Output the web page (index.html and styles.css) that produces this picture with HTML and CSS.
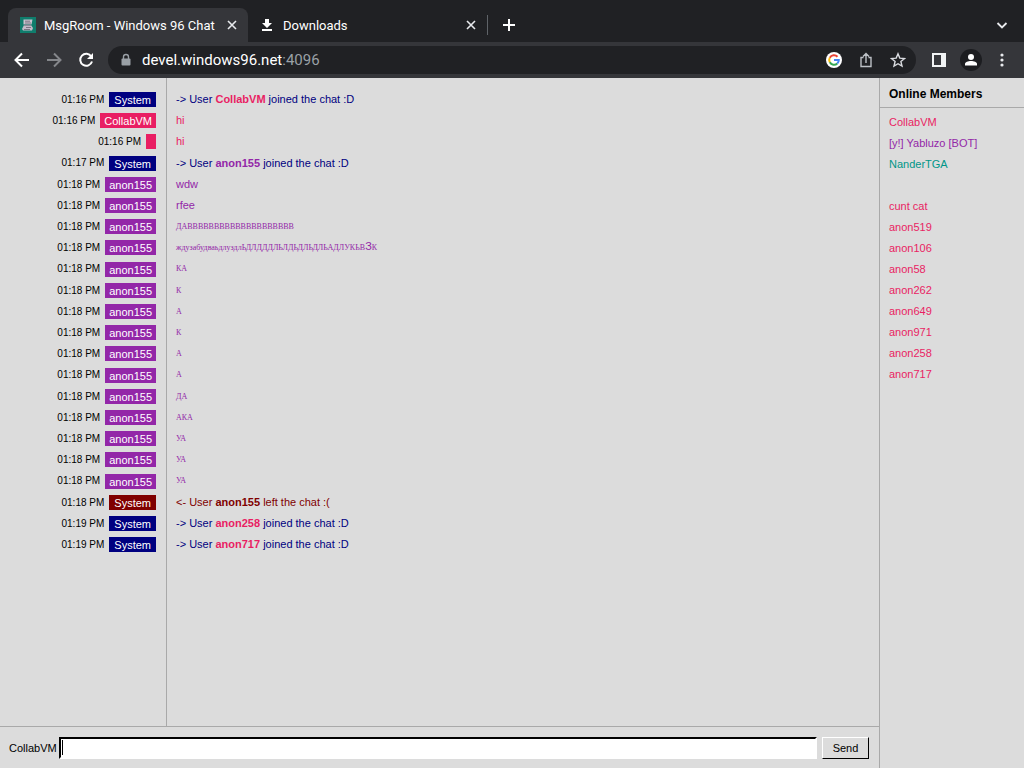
FILE: index.html
```html
<!DOCTYPE html>
<html lang="en">
<head>
  <meta charset="UTF-8">
  <meta name="viewport" content="width=device-width, initial-scale=1.0">
  <title>MsgRoom - Windows 96 Chat</title>
  <link rel="stylesheet" href="styles.css">
</head>
<body>
  <header class="browser">
    <div class="tabs">
      <div class="tab active">
        <svg class="favicon" width="16" height="16" viewBox="0 0 16 16">
          <rect width="16" height="16" fill="#0f7d6c"/>
          <path d="M3.500 2.500h9l-1 5h-8z" fill="#c9c3cf"/>
          <path d="M5 4.200h5M5 6h6" stroke="#6a6271" stroke-width=".8"/>
          <path d="M4 8h7l2 3-1 2.500H3l-1-1.500z" fill="#c2bac8"/>
          <path d="M4 8.200h7M6 10.500h5M4 12.500h6" stroke="#6a6271" stroke-width=".8"/>
        </svg>
        <span class="tab-title">MsgRoom - Windows 96 Chat</span>
        <button class="close" aria-label="Close tab">
          <svg width="10" height="10" viewBox="0 0 10 10"><path d="M1 1l8 8M9 1l-8 8" stroke="#e8eaed" stroke-width="1.600"/></svg>
        </button>
      </div>
      <div class="tab">
        <svg class="favicon" width="16" height="16" viewBox="0 0 16 16">
          <path d="M6 2h4v4h3l-5 5-5-5h3zM3 12h10v2H3z" fill="#fff"/>
        </svg>
        <span class="tab-title">Downloads</span>
        <button class="close" aria-label="Close tab">
          <svg width="10" height="10" viewBox="0 0 10 10"><path d="M1 1l8 8M9 1l-8 8" stroke="#e8eaed" stroke-width="1.600"/></svg>
        </button>
      </div>
      <button class="new-tab" aria-label="New tab">
        <svg width="12" height="12" viewBox="0 0 12 12"><path d="M6 0v12M0 6h12" stroke="#fff" stroke-width="2"/></svg>
      </button>
      <button class="tab-search" aria-label="Search tabs">
        <svg width="12" height="12" viewBox="0 0 12 12"><path d="M1.500 4l4.500 4.500L10.500 4" fill="none" stroke="#e8eaed" stroke-width="1.800"/></svg>
      </button>
    </div>
    <div class="toolbar">
      <button aria-label="Back">
        <svg width="16" height="16" viewBox="0 0 16 16"><path d="M15 8H2M8 1.500L1.500 8 8 14.500" fill="none" stroke="#fff" stroke-width="2"/></svg>
      </button>
      <button aria-label="Forward">
        <svg width="16" height="16" viewBox="0 0 16 16"><path d="M1 8h13M8 1.500L14.500 8 8 14.500" fill="none" stroke="#85878b" stroke-width="2"/></svg>
      </button>
      <button aria-label="Reload">
        <svg width="16" height="16" viewBox="0 0 16 16"><path d="M13.300 4.500A6 6 0 1 0 14 9.500" fill="none" stroke="#fff" stroke-width="2"/><path d="M15 1v6H9z" fill="#fff"/></svg>
      </button>
      <div class="address">
        <svg width="12" height="14" viewBox="0 0 12 14"><path d="M3.500 6V4a2.500 2.500 0 0 1 5 0v2" fill="none" stroke="#9aa0a6" stroke-width="1.400"/><rect x="1.500" y="5.500" width="9" height="7" rx="1" fill="#9aa0a6"/></svg>
        <span class="url">devel.windows96.net<span class="port">:4096</span></span>
        <button aria-label="Search with Google">
          <svg width="16" height="16" viewBox="0 0 16 16">
            <circle cx="8" cy="8" r="8" fill="#fff"/>
            <g fill="none" stroke-width="2">
              <path d="M11.500 4.700A4.800 4.800 0 0 0 3.800 5.700" stroke="#ea4335"/>
              <path d="M3.800 5.700a4.800 4.800 0 0 0 0 4.600" stroke="#fbbc05"/>
              <path d="M3.800 10.300a4.800 4.800 0 0 0 7.500 1.200" stroke="#34a853"/>
              <path d="M11.300 11.500A4.800 4.800 0 0 0 12.800 8H8" stroke="#4285f4"/>
            </g>
          </svg>
        </button>
        <button aria-label="Share">
          <svg width="16" height="16" viewBox="0 0 16 16"><path d="M5.500 5.500h-2.500v9h10v-9h-2.500M8 11V2M5 4.500l3-3 3 3" fill="none" stroke="#bdc1c6" stroke-width="1.400"/></svg>
        </button>
        <button aria-label="Bookmark">
          <svg width="16" height="16" viewBox="0 0 16 16"><path d="M8 1.800l1.800 4.300 4.700.4-3.600 3 1.100 4.600L8 11.700l-4 2.400 1.100-4.600-3.600-3 4.700-.4z" fill="none" stroke="#dadce0" stroke-width="1.400"/></svg>
        </button>
      </div>
      <button aria-label="Side panel">
        <svg width="14" height="14" viewBox="0 0 14 14"><path d="M0 0h14v14H0zM2 2v10h7V2z" fill="#f1f3f4" fill-rule="evenodd"/></svg>
      </button>
      <button class="profile" aria-label="Profile">
        <svg width="22" height="22" viewBox="0 0 22 22"><circle cx="11" cy="11" r="11" fill="#1c1d20"/><circle cx="11" cy="8" r="3" fill="#fff"/><path d="M5 16.500v-1.500c0-2 3-3 6-3s6 1 6 3v1.500z" fill="#fff"/></svg>
      </button>
      <button aria-label="Menu">
        <svg width="4" height="14" viewBox="0 0 4 14" fill="#e8eaed"><circle cx="2" cy="2" r="1.600"/><circle cx="2" cy="7" r="1.600"/><circle cx="2" cy="12" r="1.600"/></svg>
      </button>
    </div>
  </header>

  <div class="app">
    <main class="chat">
      <div class="log" id="log"></div>
      <form class="composer">
        <label for="message">CollabVM</label>
        <input type="text" id="message" placeholder=" " autocomplete="off" autofocus>
        <button type="submit">Send</button>
      </form>
    </main>
    <aside class="members">
      <h2>Online Members</h2>
      <ul>
        <li class="pink">CollabVM</li>
        <li class="purple">[y!] Yabluzo [BOT]</li>
        <li class="green">NanderTGA</li>
        <li></li>
        <li class="pink">cunt cat</li>
        <li class="pink">anon519</li>
        <li class="pink">anon106</li>
        <li class="pink">anon58</li>
        <li class="pink">anon262</li>
        <li class="pink">anon649</li>
        <li class="pink">anon971</li>
        <li class="pink">anon258</li>
        <li class="pink">anon717</li>
      </ul>
    </aside>
  </div>

  <script src="script.js"></script>
</body>
</html>
```

FILE: styles.css
```css
* {
  box-sizing: border-box;
}

body {
  margin: 0;
  height: 100vh;
  display: flex;
  flex-direction: column;
  background-color: #dcdcdc;
  color: #000;
  font-family: "Liberation Sans", Arial, sans-serif;
  font-size: 11px;
}

/* browser */
.browser {
  background-color: #202124;
  color: #fff;
  font-family: Roboto, sans-serif;
}

.browser button {
  display: flex;
  align-items: center;
  justify-content: center;
  padding: 0;
  border: none;
  background: none;
}

.tabs {
  display: flex;
  align-items: center;
  height: 42px;
  padding: 8px 16px 0 8px;
}

.tab {
  display: flex;
  align-items: center;
  width: 240px;
  height: 34px;
  padding: 0 11px 0 12px;
  border-radius: 8px 8px 0 0;
  font-size: 13px;
}

.tab + .tab {
  height: 20px;
  padding-left: 11px;
  border-right: 1px solid #5f6368;
  border-radius: 0;
}

.tab.active {
  background-color: #35363a;
}

.tab-title {
  flex: 1;
  margin-left: 8px;
  white-space: nowrap;
}

.new-tab {
  margin-left: 15px;
}

.tab-search {
  margin-left: auto;
}

.toolbar {
  display: flex;
  align-items: center;
  gap: 16px;
  height: 36px;
  padding: 0 20px 0 14px;
  background-color: #35363a;
}

.address {
  flex: 1;
  display: flex;
  align-items: center;
  gap: 16px;
  height: 28px;
  margin-left: -2px;
  padding: 0 10px 0 12px;
  border-radius: 14px;
  background-color: #202124;
}

.url {
  flex: 1;
  margin-left: -6px;
  font-size: 15px;
}

.port {
  color: #9aa0a6;
}

.profile {
  margin: 0 2px 0 -2px;
}

/* chat */
.app {
  flex: 1;
  display: flex;
  min-height: 0;
}

.chat {
  flex: 1;
  display: flex;
  flex-direction: column;
  border-right: 1px solid #a9a9a9;
}

.log {
  flex: 1;
  display: flex;
  flex-direction: column;
}

.row {
  display: flex;
  line-height: 21px;
}

.row:nth-child(5n) {
  line-height: 22px;
}

.meta {
  display: flex;
  align-items: center;
  justify-content: flex-end;
  gap: 5px;
  width: 167px;
  padding-right: 10px;
  border-right: 1px solid #a9a9a9;
}

.spacer .meta {
  height: 11px;
}

.rest {
  flex: 1;
}

.time {
  font-size: 10px;
}

.nick {
  min-width: 10px;
  height: 15px;
  padding: 0 4px;
  line-height: 16px;
  color: #fff;
  background-color: #e91e63;
}

.nick.join {
  padding: 0 5px;
  background-color: #000080;
}

.nick.left {
  padding: 0 5px;
  background-color: #800000;
}

.nick.anon {
  background-color: #9327a8;
}

.text {
  padding-left: 9px;
}

.text.join {
  color: #000080;
}

.text.left {
  color: #800000;
}

.cyr {
  font-family: "Liberation Serif", serif;
  font-size: 8px;
}

.cyr span {
  font-family: "Liberation Sans", Arial, sans-serif;
  font-size: 11px;
  line-height: 11px;
}

.pink {
  color: #e91e63;
}

.purple,
.text.anon {
  color: #9327a8;
}

.green {
  color: #009688;
}

.composer {
  display: flex;
  align-items: center;
  height: 42px;
  padding: 0 10px 0 9px;
  border-top: 1px solid #a9a9a9;
}

.composer input {
  flex: 1;
  height: 22px;
  margin: 0 5px 0 2px;
  padding: 0 2px;
  border: 2px solid;
  border-color: #000 #fff #fff #000;
  outline: none;
  background-color: #fff;
  font: inherit;
}

/* steady caret while the box is empty */
.composer input:placeholder-shown {
  caret-color: transparent;
  background: #fff linear-gradient(#000, #000) 1px 1px / 1px 15px no-repeat;
}

.composer button {
  width: 47px;
  height: 22px;
  padding: 0;
  border: 1px solid;
  border-color: #fff #000 #000 #fff;
  background-color: #dcdcdc;
  font: inherit;
}

/* members */
.members {
  width: 144px;
}

.members h2 {
  height: 30px;
  margin: 0;
  padding-left: 9px;
  border-bottom: 1px solid #a9a9a9;
  font-size: 12px;
  line-height: 32px;
}

.members ul {
  margin: 0;
  padding: 4px 9px;
  list-style: none;
}

.members li {
  height: 21px;
  line-height: 21px;
}
```

FILE: script.js
```js
const messages = [
  ['01:16 PM', 'System', 'join', '-> User <b class="pink">CollabVM</b> joined the chat :D'],
  ['01:16 PM', 'CollabVM', 'pink', 'hi'],
  ['01:16 PM', '', 'pink', 'hi'],
  ['01:17 PM', 'System', 'join', '-> User <b class="purple">anon155</b> joined the chat :D'],
  ['01:18 PM', 'anon155', 'anon', 'wdw'],
  ['01:18 PM', 'anon155', 'anon', 'rfee'],
  ['01:18 PM', 'anon155', 'anon cyr', 'ДАВВВВВВВВВВВВВВВВВВВВ'],
  ['01:18 PM', 'anon155', 'anon cyr', 'ждузабудваьдлуздлЬДЛДДДЛЬЛДЬДЛЬДЛЬАДЛУКЬВ<span>З</span>К'],
  ['01:18 PM', 'anon155', 'anon cyr', 'КА'],
  ['01:18 PM', 'anon155', 'anon cyr', 'К'],
  ['01:18 PM', 'anon155', 'anon cyr', 'А'],
  ['01:18 PM', 'anon155', 'anon cyr', 'К'],
  ['01:18 PM', 'anon155', 'anon cyr', 'А'],
  ['01:18 PM', 'anon155', 'anon cyr', 'А'],
  ['01:18 PM', 'anon155', 'anon cyr', 'ДА'],
  ['01:18 PM', 'anon155', 'anon cyr', 'АКА'],
  ['01:18 PM', 'anon155', 'anon cyr', 'УА'],
  ['01:18 PM', 'anon155', 'anon cyr', 'УА'],
  ['01:18 PM', 'anon155', 'anon cyr', 'УА'],
  ['01:18 PM', 'System', 'left', '&lt;- User <b>anon155</b> left the chat :('],
  ['01:19 PM', 'System', 'join', '-> User <b class="pink">anon258</b> joined the chat :D'],
  ['01:19 PM', 'System', 'join', '-> User <b class="pink">anon717</b> joined the chat :D']
];

const log = document.getElementById('log');
let html = '<div class="row spacer"><div class="meta"></div></div>';

messages.forEach(function(m) {
  const nick = m[2].split(' ')[0];
  html += `<div class="row">
    <div class="meta"><span class="time">${m[0]}</span><span class="nick ${nick === 'pink' ? '' : nick}">${m[1]}</span></div>
    <div class="text ${m[2]}">${m[3]}</div>
  </div>`;
});

html += '<div class="row rest"><div class="meta"></div></div>';
log.innerHTML = html;
document.getElementById('message').focus();
```
